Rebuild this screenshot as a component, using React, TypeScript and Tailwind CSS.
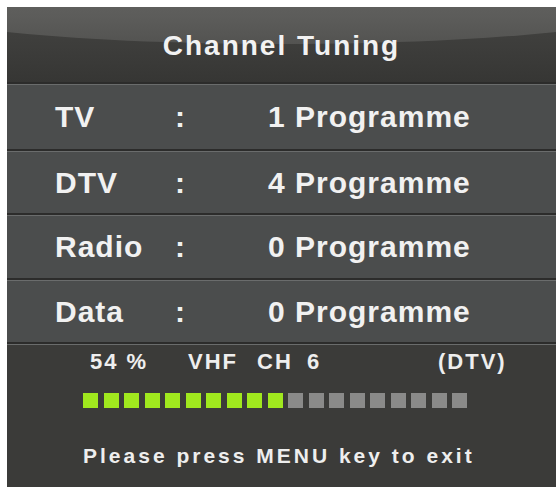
import React from "react";

const font = { fontFamily: '"Liberation Sans", Arial, sans-serif' };

function Sep() {
  return (
    <div className="flex flex-col">
      <div className="h-[2px] bg-[#2c2c2b]" />
      <div className="h-[1px] bg-[#6a6c6c]" />
    </div>
  );
}

function Row({ label, value, h }: { label: string; value: string; h: string }) {
  return (
    <div className={`flex items-center bg-[#4b4d4d] ${h} text-[30px] font-bold tracking-[1px] text-[#f1f1f1] leading-none`}>
      <span className="ml-[48px] w-[120px]">{label}</span>
      <span className="w-[93px]">:</span>
      <span>{value}</span>
    </div>
  );
}

export default function App() {
  const total = 19;
  const filled = 10;
  return (
    <div className="w-[559px] h-[487px] bg-white pl-[7px] pt-[7px] pr-[3px] overflow-hidden" style={font}>
      <div className="flex flex-col h-full bg-[#3b3b39]">
        <div className="relative h-[75px] overflow-hidden bg-[linear-gradient(180deg,#444442_0%,#3c3c3a_60%,#363634_100%)] flex items-center justify-center">
          <div className="absolute left-[-126px] top-[-51px] w-[800px] h-[88px] rounded-[50%] bg-[linear-gradient(180deg,#6a6a68_0%,#5c5c5a_70%,#535351_100%)]" />
          <span className="relative text-[28px] font-bold tracking-[2px] text-[#f2f2f2] leading-none mt-[2px]">
            Channel Tuning
          </span>
        </div>
        <Sep />
        <Row label="TV" value="1 Programme" h="h-[64px]" />
        <Sep />
        <Row label="DTV" value="4 Programme" h="h-[61px]" />
        <Sep />
        <Row label="Radio" value="0 Programme" h="h-[62px]" />
        <Sep />
        <Row label="Data" value="0 Programme" h="h-[61px]" />
        <Sep />
        <div className="flex-1 flex flex-col text-[#eeeeee] font-bold leading-none">
          <div className="flex ml-[83px] mt-[6px] text-[22px] tracking-[2px]">
            <span className="w-[98px]">54 %</span>
            <span className="w-[69px]">VHF</span>
            <span className="w-[50px]">CH</span>
            <span className="w-[131px]">6</span>
            <span>(DTV)</span>
          </div>
          <div className="flex gap-[5.5px] ml-[76px] mt-[20px]">
            {Array.from({ length: total }).map((_, i) => (
              <div
                key={i}
                className={i < filled ? "w-[15px] h-[15px] bg-[#a0e81e]" : "w-[15px] h-[15px] bg-[#8a8a89]"}
              />
            ))}
          </div>
          <div className="ml-[76px] mt-[37px] text-[21px] tracking-[3px]">
            Please press MENU key to exit
          </div>
        </div>
      </div>
    </div>
  );
}
